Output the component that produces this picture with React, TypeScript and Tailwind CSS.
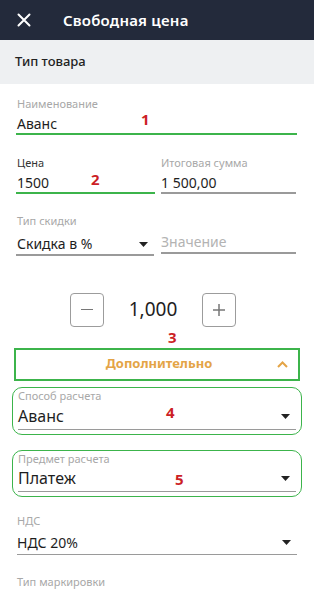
import React from "react";

const font = { fontFamily: '"Noto Sans", "Open Sans", sans-serif' };

function Tri() {
  return (
    <svg width="9" height="5" viewBox="0 0 9 5" className="shrink-0">
      <path d="M0 0 L9 0 L4.5 5 Z" fill="#222" />
    </svg>
  );
}

function Num({ n, x, y }: { n: string; x: number; y: number }) {
  return (
    <div
      className="absolute text-[15px] font-bold leading-none text-[#cc1f26]"
      style={{ left: x, top: y }}
    >
      {n}
    </div>
  );
}

export default function App() {
  return (
    <div className="relative w-[314px] h-[598px] overflow-hidden bg-white" style={font}>
      {/* Header */}
      <div className="h-[40px] bg-[#232a3b] flex items-center">
        <svg width="14" height="14" viewBox="0 0 14 14" className="ml-[17px]">
          <path d="M1.5 1.5 L12.5 12.5 M12.5 1.5 L1.5 12.5" stroke="#fff" strokeWidth="2" strokeLinecap="round" />
        </svg>
        <div className="ml-[32px] text-white text-[15px] font-semibold tracking-[0.2px]">Свободная цена</div>
      </div>
      {/* section */}
      <div className="h-[44px] bg-[#eef0f2] flex items-center pl-[15px] text-[13px] font-medium text-[#222]">
        Тип товара
      </div>

      <div className="px-[16px]">
        {/* Наименование */}
        <div className="pt-[13px] pr-[1px]">
          <div className="text-[11px] leading-[14px] text-[#a8a8a8] pl-[1px]">Наименование</div>
          <div className="mt-[4px] text-[14px] leading-[18px] text-[#1e1e1e] pl-[1px]">Аванс</div>
          <div className="h-[2px] bg-[#3cb44b]" />
        </div>

        {/* Цена / Итоговая сумма */}
        <div className="mt-[21px] grid grid-cols-[139px_135px] gap-x-[6px] pl-0">
          <div>
            <div className="text-[11px] leading-[14px] text-[#333] pl-[1px]">Цена</div>
            <div className="mt-[4px] text-[14px] leading-[18px] text-[#1e1e1e] pl-[1px]">1500</div>
            <div className="h-[2px] bg-[#3cb44b]" />
          </div>
          <div>
            <div className="text-[11px] leading-[14px] text-[#a8a8a8]">Итоговая сумма</div>
            <div className="mt-[4px] text-[14px] leading-[18px] text-[#1e1e1e]">1 500,00</div>
            <div className="mt-[0px] h-[1.5px] bg-[#9a9a9a]" />
          </div>
        </div>

        {/* Тип скидки */}
        <div className="mt-[20px] grid grid-cols-[138px_135px] gap-x-[7px]">
          <div>
            <div className="text-[11px] leading-[14px] text-[#a8a8a8] pl-[1px]">Тип скидки</div>
            <div className="mt-[7px] flex items-center justify-between pr-[6px] text-[14px] leading-[18px] text-[#1e1e1e] pl-[1px]">
              <span>Скидка в %</span>
              <Tri />
            </div>
            <div className="mt-[1px] h-[1.5px] bg-[#9a9a9a]" />
          </div>
          <div className="flex flex-col justify-end">
            <div className="text-[14px] leading-[18px] text-[#b3b3b3]">Значение</div>
            <div className="mt-[1px] mb-[2px] h-[1.5px] bg-[#9a9a9a]" />
          </div>
        </div>

        {/* stepper */}
        <div className="mt-[37px] flex items-center">
          <div className="ml-[54px] w-[34px] h-[34px] rounded-[4px] border border-[#9c9c9c] flex items-center justify-center">
            <div className="w-[12px] h-[1.5px] bg-[#777]" />
          </div>
          <div className="w-[98px] text-center text-[19px] text-[#1e1e1e]">1,000</div>
          <div className="w-[34px] h-[34px] rounded-[4px] border border-[#9c9c9c] flex items-center justify-center">
            <svg width="14" height="14" viewBox="0 0 14 14">
              <path d="M7 1 V13 M1 7 H13" stroke="#777" strokeWidth="1.5" />
            </svg>
          </div>
        </div>
      </div>

      {/* Дополнительно */}
      <div className="mt-[21px] mx-[14px] h-[33px] border-2 border-[#3cb44b] flex items-center relative">
        <div className="flex-1 text-center text-[13px] font-bold text-[#e4a446] pl-[4px]">Дополнительно</div>
        <svg width="11" height="7" viewBox="0 0 11 7" className="absolute right-[10px] top-[11px]">
          <path d="M1 6 L5.5 1.5 L10 6" stroke="#e4a446" strokeWidth="2" fill="none" />
        </svg>
      </div>

      {/* Способ расчета */}
      <div className="mt-[6px] mx-[12px] h-[48px] rounded-[10px] border-[1.5px] border-[#3cb44b] px-[5px]">
        <div className="pt-[1px] text-[11px] leading-[14px] text-[#a8a8a8]">Способ расчета</div>
        <div className="mt-[3px] flex items-center justify-between pr-[6px] text-[16px] leading-[21px] text-[#1e1e1e]">
          <span>Аванс</span>
          <Tri />
        </div>
        <div className="mt-[2px] h-[1.5px] bg-[#9a9a9a]" />
      </div>

      {/* Предмет расчета */}
      <div className="mt-[15px] mx-[12px] h-[47px] rounded-[10px] border-[1.5px] border-[#3cb44b] px-[5px]">
        <div className="pt-[1px] text-[11px] leading-[14px] text-[#a8a8a8]">Предмет расчета</div>
        <div className="mt-[2px] flex items-center justify-between pr-[6px] text-[16px] leading-[21px] text-[#1e1e1e]">
          <span>Платеж</span>
          <Tri />
        </div>
        <div className="mt-[2px] h-[1.5px] bg-[#9a9a9a]" />
      </div>

      {/* НДС */}
      <div className="mt-[17px] mx-[17px]">
        <div className="text-[11px] leading-[14px] text-[#a8a8a8]">НДС</div>
        <div className="mt-[5px] flex items-center justify-between pr-[6px] text-[14px] leading-[20px] text-[#1e1e1e]">
          <span>НДС 20%</span>
          <Tri />
        </div>
        <div className="mt-[1px] h-[1.5px] bg-[#9a9a9a]" />
      </div>

      <div className="mt-[20px] mx-[17px] text-[11px] leading-[14px] text-[#a8a8a8]">Тип маркировки</div>

      <Num n="1" x={141} y={112} />
      <Num n="2" x={91} y={172} />
      <Num n="3" x={168} y={330} />
      <Num n="4" x={166} y={405} />
      <Num n="5" x={175} y={472} />
    </div>
  );
}
